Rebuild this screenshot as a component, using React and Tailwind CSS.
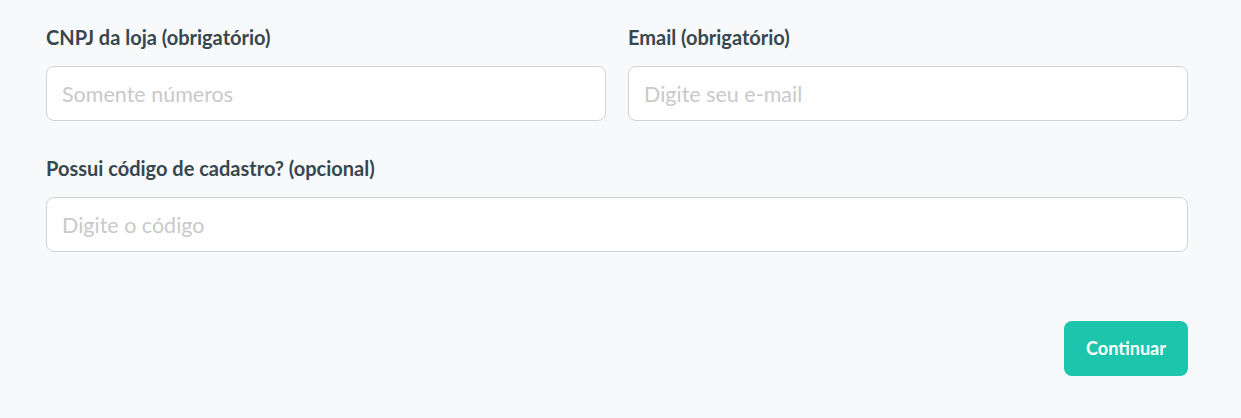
import React from 'react';

const Field = ({ label, placeholder, className = '' }) => (
  <div className={`flex flex-col ${className}`}>
    <label className="text-[20px] leading-[24px] font-bold text-[#37474f] mb-[17px] font-['Lato',sans-serif]">
      {label}
    </label>
    <input
      type="text"
      placeholder={placeholder}
      className="h-[55px] w-full rounded-[8px] border border-[#d2d2d2] bg-white px-[15px] text-[21.5px] text-[#37474f] placeholder:text-[#c9c9c9] font-['Lato',sans-serif] outline-none"
    />
  </div>
);

export default function App() {
  return (
    <div className="min-h-[418px] w-full bg-[#f8f9fb] font-['Lato',sans-serif]">
      <div className="ml-[46px] w-[1142px] pt-[25px]">
        <div className="grid grid-cols-2 gap-[22px]">
          <Field label="CNPJ da loja (obrigatório)" placeholder="Somente números" />
          <Field label="Email (obrigatório)" placeholder="Digite seu e-mail" />
        </div>
        <Field
          className="mt-[35px]"
          label="Possui código de cadastro? (opcional)"
          placeholder="Digite o código"
        />
        <div className="mt-[69px] flex justify-end">
          <button className="h-[55px] w-[124px] rounded-[8px] bg-[#1cc5ac] text-[18px] font-bold text-white">
            Continuar
          </button>
        </div>
      </div>
    </div>
  );
}
